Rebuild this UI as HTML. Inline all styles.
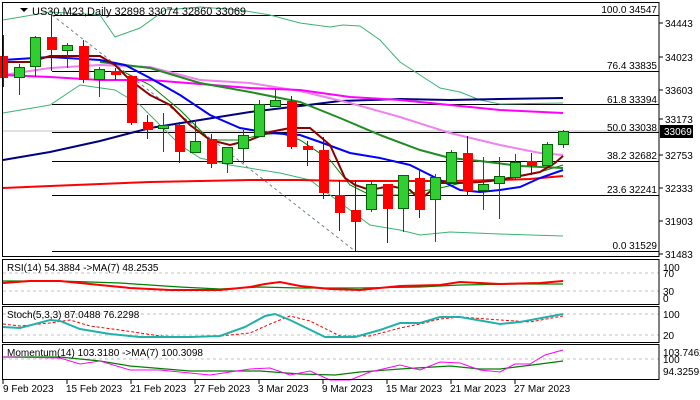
<!DOCTYPE html>
<html><head><meta charset="utf-8"><style>
html,body{margin:0;padding:0;background:#fff;}
svg{display:block;font-family:"Liberation Sans",sans-serif;font-size:10px;}
</style></head><body>
<svg width="700" height="400" viewBox="0 0 700 400" xmlns="http://www.w3.org/2000/svg">
<rect width="700" height="400" fill="#fff"/>
<!-- main panel -->
<line x1="2" y1="131" x2="659" y2="131" stroke="#c0c0c0" stroke-width="1"/>
<g stroke="#000" stroke-width="1">
<line x1="52" y1="15.5" x2="659" y2="15.5"/>
<line x1="52" y1="71.5" x2="659" y2="71.5"/>
<line x1="52" y1="104.5" x2="659" y2="104.5"/>
<line x1="52" y1="132.5" x2="659" y2="132.5"/>
<line x1="52" y1="161.5" x2="659" y2="161.5"/>
<line x1="52" y1="195.5" x2="659" y2="195.5"/>
<line x1="52" y1="251.5" x2="659" y2="251.5"/>
</g>
<g fill="#000" text-anchor="end">
<text x="657" y="13">100.0 34547</text>
<text x="657" y="69">76.4 33835</text>
<text x="657" y="103">61.8 33394</text>
<text x="657" y="131">50.0 33038</text>
<text x="657" y="159">38.2 32682</text>
<text x="657" y="193">23.6 32241</text>
<text x="657" y="249">0.0 31529</text>
</g>
<line x1="52" y1="15" x2="355" y2="251" stroke="#708090" stroke-dasharray="3,3"/>
<!-- bollinger -->
<polyline fill="none" stroke="#3cb371" stroke-width="1" points="3,20 50,12 100,15 115,37 140,28 165,10 200,7 240,10 270,15 300,23 330,27 343,25 360,26 380,40 400,62 420,75 440,88 460,92 480,100 500,104 563,103"/>
<polyline fill="none" stroke="#3cb371" stroke-width="1" points="3,113 50,105 80,85 115,90 140,105 160,125 180,145 200,158 230,165 280,173 310,180 330,195 350,210 370,225 400,230 420,235 450,232 500,234 563,236"/>
<polyline fill="none" stroke="#008000" stroke-width="1" points="120,70 150,85 180,110 210,140 240,140 260,135 280,133 300,140 330,160 350,185 370,195 400,195 440,188 470,181 500,179 540,172 563,165"/>
<!-- MAs -->
<polyline fill="none" stroke="#ff0000" stroke-width="2" points="3,188 50,186 100,184 150,182 200,181 250,180 300,180 350,181 400,181 450,181 500,180 530,179 563,176"/>
<polyline fill="none" stroke="#000080" stroke-width="2" points="3,160 50,152 100,141 150,128 200,120 250,112 300,106 340,101 400,99 450,100 500,99 563,98"/>
<polyline fill="none" stroke="#ee82ee" stroke-width="2" points="3,75 50,68 100,65 150,67 200,80 250,83 300,91 350,103 400,117 450,133 500,145 540,153 563,155"/>
<polyline fill="none" stroke="#ff00ff" stroke-width="2" points="3,75 50,77 100,80 150,80 200,84 250,88 300,90 350,97 400,100 450,105 500,110 563,113"/>
<polyline fill="none" stroke="#228b22" stroke-width="2" points="100,62 150,68 200,83 250,92 300,102 340,118 380,135 420,150 450,158 480,161 520,166 563,168"/>
<polyline fill="none" stroke="#0000ff" stroke-width="2" points="3,60 50,57 100,60 125,65 150,78 180,95 210,115 240,128 270,133 300,135 320,142 350,153 380,158 410,165 430,175 460,190 480,192 500,190 520,187 540,178 563,170"/>
<polyline fill="none" stroke="#8b0000" stroke-width="2" points="3,62 30,62 50,56 100,56 115,65 130,80 150,95 170,105 190,125 210,140 230,145 250,140 270,132 290,128 310,128 330,145 345,178 355,185 370,190 390,186 410,190 420,200 440,183 460,183 480,182 500,180 520,176 540,172 555,163 563,156"/>
<!-- candles -->
<g stroke-width="1">
<g stroke="#8b0000" fill="#ff0000">
<line x1="3.5" y1="35" x2="3.5" y2="87"/><rect x="-1" y="56" width="9" height="22" stroke="none"/>
<line x1="51.5" y1="15" x2="51.5" y2="71"/><rect x="47" y="37" width="10" height="13" stroke="none"/>
<line x1="83.5" y1="40" x2="83.5" y2="83"/><rect x="79" y="46" width="10" height="34" stroke="none"/>
<line x1="115.5" y1="68" x2="115.5" y2="80"/><rect x="111" y="71" width="10" height="4" stroke="none"/>
<line x1="131.5" y1="76" x2="131.5" y2="125"/><rect x="127" y="76" width="10" height="47" stroke="none"/>
<line x1="147.5" y1="115" x2="147.5" y2="139"/><rect x="143" y="122" width="10" height="8" stroke="none"/>
<line x1="179.5" y1="122" x2="179.5" y2="163"/><rect x="175" y="125" width="10" height="27" stroke="none"/>
<line x1="211.5" y1="134" x2="211.5" y2="168"/><rect x="207" y="139" width="10" height="25" stroke="none"/>
<line x1="291.5" y1="96" x2="291.5" y2="149"/><rect x="287" y="101" width="10" height="46" stroke="none"/>
<line x1="307.5" y1="141" x2="307.5" y2="166"/><rect x="303" y="146" width="10" height="4" stroke="none"/>
<line x1="323.5" y1="137" x2="323.5" y2="199"/><rect x="319" y="150" width="10" height="43" stroke="none"/>
<line x1="339.5" y1="180" x2="339.5" y2="231"/><rect x="335" y="195" width="10" height="18" stroke="none"/>
<line x1="355.5" y1="180" x2="355.5" y2="251"/><rect x="351" y="210" width="10" height="12" stroke="none"/>
<line x1="387.5" y1="184" x2="387.5" y2="243"/><rect x="383" y="184" width="10" height="25" stroke="none"/>
<line x1="419.5" y1="169" x2="419.5" y2="218"/><rect x="415" y="178" width="10" height="32" stroke="none"/>
<line x1="467.5" y1="136" x2="467.5" y2="196"/><rect x="463" y="153" width="10" height="38" stroke="none"/>
<line x1="531.5" y1="153" x2="531.5" y2="175"/><rect x="527" y="161" width="10" height="5" stroke="none"/>
</g>
<g stroke="#006400" fill="#32cd32">
<line x1="19.5" y1="64" x2="19.5" y2="95"/><rect x="14.5" y="67.5" width="10" height="10"/>
<line x1="35.5" y1="36" x2="35.5" y2="77"/><rect x="30.5" y="37.5" width="10" height="29"/>
<line x1="67.5" y1="43" x2="67.5" y2="68"/><rect x="62.5" y="45.5" width="10" height="5"/>
<line x1="99.5" y1="67" x2="99.5" y2="97"/><rect x="94.5" y="69.5" width="10" height="10"/>
<line x1="163.5" y1="113" x2="163.5" y2="152"/><rect x="158.5" y="125.5" width="10" height="3"/>
<line x1="195.5" y1="120" x2="195.5" y2="152"/><rect x="190.5" y="141.5" width="10" height="11"/>
<line x1="227.5" y1="147" x2="227.5" y2="173"/><rect x="222.5" y="147.5" width="10" height="16"/>
<line x1="243.5" y1="130" x2="243.5" y2="163"/><rect x="238.5" y="135.5" width="10" height="13"/>
<line x1="259.5" y1="100" x2="259.5" y2="137"/><rect x="254.5" y="104.5" width="10" height="32"/>
<line x1="275.5" y1="90" x2="275.5" y2="106"/><rect x="270.5" y="100.5" width="10" height="6"/>
<line x1="371.5" y1="181" x2="371.5" y2="212"/><rect x="366.5" y="184.5" width="10" height="25"/>
<line x1="403.5" y1="175" x2="403.5" y2="232"/><rect x="398.5" y="175.5" width="10" height="33"/>
<line x1="435.5" y1="174" x2="435.5" y2="242"/><rect x="430.5" y="177.5" width="10" height="22"/>
<line x1="451.5" y1="150" x2="451.5" y2="184"/><rect x="446.5" y="152.5" width="10" height="30"/>
<line x1="483.5" y1="157" x2="483.5" y2="210"/><rect x="478.5" y="184.5" width="10" height="6"/>
<line x1="499.5" y1="157" x2="499.5" y2="219"/><rect x="494.5" y="176.5" width="10" height="7"/>
<line x1="515.5" y1="154" x2="515.5" y2="180"/><rect x="510.5" y="162.5" width="10" height="15"/>
<line x1="547.5" y1="142" x2="547.5" y2="167"/><rect x="542.5" y="144.5" width="10" height="21"/>
<line x1="563.5" y1="130" x2="563.5" y2="148"/><rect x="558.5" y="131.5" width="10" height="13"/>
</g>
</g>
<rect x="2.5" y="2.5" width="656.5" height="254" fill="none" stroke="#000"/>
<path d="M20,8 l4,4 l4,-4z" fill="#000"/>
<text x="32" y="15" fill="#000" font-size="11">US30.M23,Daily  32898 33074 32860 33069</text>
<!-- price axis -->
<g fill="#000" stroke="#000">
<line x1="659" y1="23" x2="663" y2="23"/><line x1="659" y1="57" x2="663" y2="57"/><line x1="659" y1="90" x2="663" y2="90"/><line x1="659" y1="119" x2="663" y2="119"/><line x1="659" y1="155" x2="663" y2="155"/><line x1="659" y1="188" x2="663" y2="188"/><line x1="659" y1="221" x2="663" y2="221"/><line x1="659" y1="254" x2="663" y2="254"/>
</g>
<g fill="#000">
<text x="665" y="27">34443</text><text x="665" y="61">34023</text><text x="665" y="94">33603</text><text x="665" y="123">33173</text><text x="665" y="159">32753</text><text x="665" y="192">32333</text><text x="665" y="225">31903</text><text x="665" y="258">31483</text>
</g>
<rect x="660" y="125" width="33" height="13" fill="#000"/>
<text x="664" y="135" fill="#fff">33069</text>
<!-- RSI -->
<g stroke="#c0c0c0" stroke-dasharray="3,3"><line x1="3" y1="273" x2="659" y2="273"/><line x1="3" y1="291" x2="659" y2="291"/>
<line x1="3" y1="314" x2="659" y2="314"/><line x1="3" y1="335" x2="659" y2="335"/><line x1="3" y1="359" x2="659" y2="359"/></g>
<polyline fill="none" stroke="#008000" stroke-width="1.2" points="3,281 60,281 120,283 180,287 220,289 260,287 300,288 360,288 420,287 460,285 520,284 563,284"/>
<polyline fill="none" stroke="#ff0000" stroke-width="2" points="3,283 30,281 60,281 100,285 130,288 170,290 220,290 250,287 265,284 280,282 300,286 330,289 360,290 400,286 440,285 460,282 500,284 540,283 563,281"/>
<rect x="2.5" y="259.5" width="656.5" height="45" fill="none" stroke="#000"/>
<text x="7" y="271" fill="#000">RSI(14) 54.3884  -&gt;MA(7) 48.2535</text>
<!-- Stoch -->
<polyline fill="none" stroke="#ff0000" stroke-width="1" stroke-dasharray="3,2" points="3,324 20,326 50,323 70,320 90,326 120,330 160,336 190,337 220,336 250,333 270,324 290,316 310,321 340,336 370,336 400,328 420,324 440,319 460,317 500,320 530,322 563,316"/>
<polyline fill="none" stroke="#20b2aa" stroke-width="2" points="3,327 20,328 50,320 60,321 80,329 110,334 140,337 190,337 220,336 245,327 265,316 275,314 290,320 325,337 355,337 380,330 400,323 420,323 440,317 460,317 500,324 520,322 563,314"/>
<rect x="2.5" y="306.5" width="656.5" height="36" fill="none" stroke="#000"/>
<text x="7" y="318" fill="#000">Stoch(5,3,3) 87.0488 76.2298</text>
<!-- Momentum -->
<polyline fill="none" stroke="#008000" stroke-width="1.2" points="3,357 60,357 100,361 130,366 190,371 260,371 300,374 335,375 360,372 400,369 450,366 480,369 500,369 540,364 563,361"/>
<polyline fill="none" stroke="#ff00ff" stroke-width="1" points="3,357 60,358 80,364 100,361 130,370 160,370 210,375 250,369 270,368 290,375 310,371 330,380 350,380 370,372 400,365 420,370 440,362 460,363 480,370 500,372 515,364 530,364 545,355 563,350"/>
<rect x="2.5" y="344.5" width="656.5" height="35" fill="none" stroke="#000"/>
<text x="7" y="356" fill="#000">Momentum(14) 103.3180  -&gt;MA(7) 100.3098</text>
<!-- sub axes labels -->
<g fill="#000">
<text x="663" y="271">100</text><text x="663" y="277">70</text><text x="663" y="295">30</text><text x="663" y="302">0</text>
<text x="663" y="318">100</text><text x="663" y="339">20</text>
<text x="663" y="356">103.7462</text><text x="663" y="363">100</text><text x="663" y="375">94.3259</text>
</g>
<!-- dates -->
<g stroke="#000"><line x1="3" y1="380" x2="3" y2="384"/><line x1="67" y1="380" x2="67" y2="384"/><line x1="131" y1="380" x2="131" y2="384"/><line x1="195" y1="380" x2="195" y2="384"/><line x1="259" y1="380" x2="259" y2="384"/><line x1="323" y1="380" x2="323" y2="384"/><line x1="387" y1="380" x2="387" y2="384"/><line x1="451" y1="380" x2="451" y2="384"/><line x1="515" y1="380" x2="515" y2="384"/></g>
<g fill="#000">
<text x="3" y="392">9 Feb 2023</text><text x="66" y="392">15 Feb 2023</text><text x="130" y="392">21 Feb 2023</text><text x="194" y="392">27 Feb 2023</text><text x="258" y="392">3 Mar 2023</text><text x="322" y="392">9 Mar 2023</text><text x="386" y="392">15 Mar 2023</text><text x="450" y="392">21 Mar 2023</text><text x="514" y="392">27 Mar 2023</text>
</g>
</svg>
</body></html>
